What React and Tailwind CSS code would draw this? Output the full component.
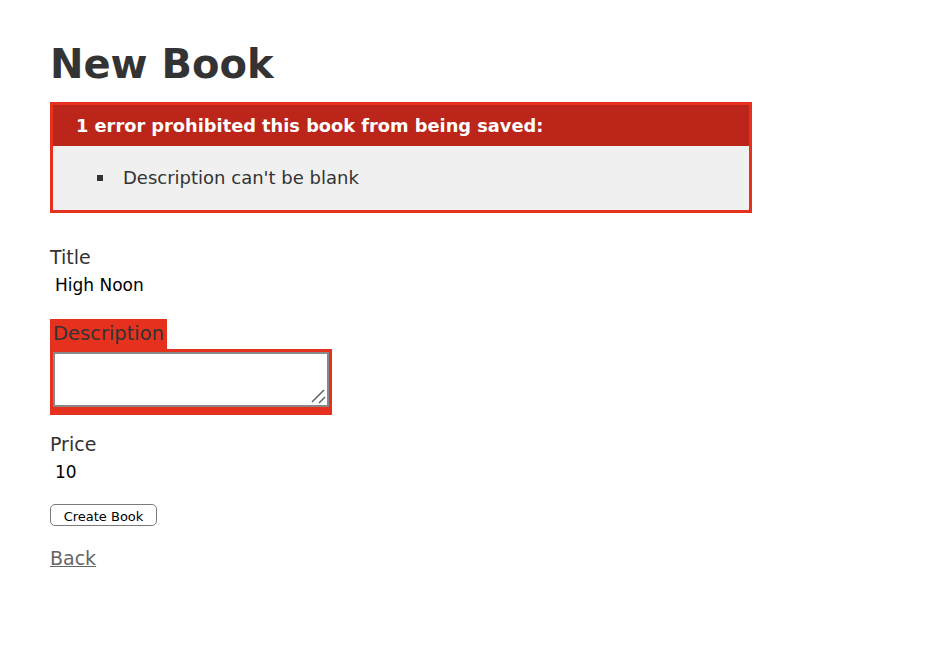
import React from 'react';

const font = { fontFamily: '"DejaVu Sans", Verdana, sans-serif' };

function ResizeGrip() {
  return (
    <svg className="pointer-events-none absolute bottom-[3px] right-[3px]" width="16" height="16" viewBox="0 0 16 16">
      <line x1="2" y1="14" x2="14" y2="2" stroke="#666" strokeWidth="1.6" />
      <line x1="9" y1="15" x2="15" y2="9" stroke="#666" strokeWidth="1.6" />
    </svg>
  );
}

export default function App() {
  return (
    <div className="min-h-[672px] bg-white px-[50px] pt-[36px] text-[#333]" style={font}>
      <h1 className="text-[40px] font-bold leading-[56px] text-[#333]">New Book</h1>

      <div className="mt-[10px] w-[702px] border-[3px] border-[#e6311f] bg-[#f0f0f0]">
        <h2 className="bg-[#bb251a] py-[9px] pl-[23px] text-[17.8px] font-bold leading-[23px] text-white">
          1 error prohibited this book from being saved:
        </h2>
        <ul className="py-[21px] pl-[44px]">
          <li className="flex items-center text-[18px] leading-[22px] text-[#333]">
            <span className="mr-[20px] h-[6px] w-[6px] bg-[#333]" />
            Description can't be blank
          </li>
        </ul>
      </div>

      <div className="mt-[31px]">
        <div className="text-[19px] leading-[26px]">Title</div>
        <div className="pl-[5px] text-[17px] leading-[31px] text-black">High Noon</div>
      </div>

      <div className="mt-[18px]">
        <div className="inline-block bg-[#e6311f] px-[3px] text-[19.5px] leading-[30px] text-[#333]">Description</div>
        <div className="w-[282px] bg-[#e6311f] p-[3px] pb-[8px]">
          <div className="relative">
            <textarea className="block h-[55px] w-[276px] resize-none border-2 border-[#888] bg-white" />
            <ResizeGrip />
          </div>
        </div>
      </div>

      <div className="mt-[16px]">
        <div className="text-[19px] leading-[26px]">Price</div>
        <div className="pl-[5px] text-[17px] leading-[31px] text-black">10</div>
      </div>

      <button className="mt-[16px] block h-[22px] w-[107px] rounded-[5px] border-[1.5px] border-[#7a7a7a] bg-white pt-[3px] text-[13px] leading-[16px] text-black">
        Create Book
      </button>

      <a href="#" className="mt-[19px] inline-block text-[19px] leading-[26px] text-[#666] underline">Back</a>
    </div>
  );
}
